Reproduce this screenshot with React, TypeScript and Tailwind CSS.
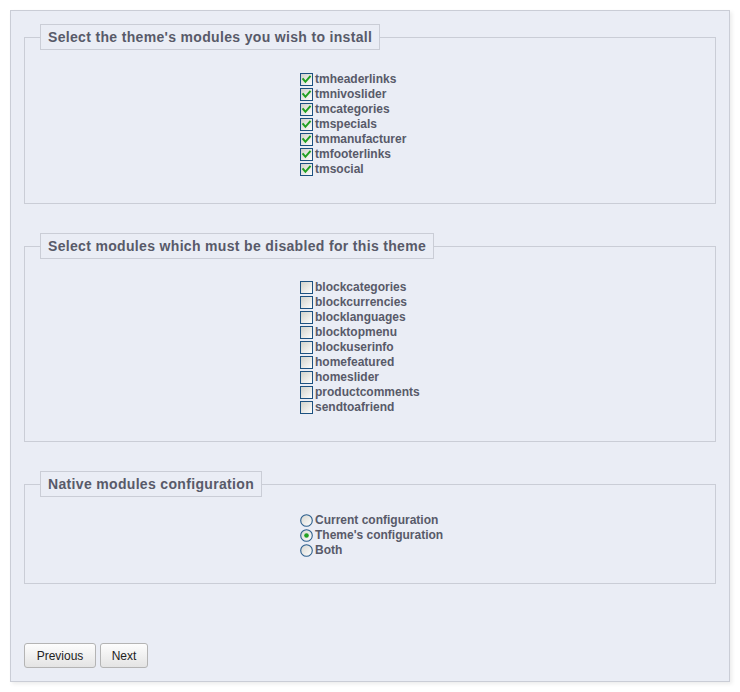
import React from 'react';

const installModules = [
  'tmheaderlinks',
  'tmnivoslider',
  'tmcategories',
  'tmspecials',
  'tmmanufacturer',
  'tmfooterlinks',
  'tmsocial',
];

const disableModules = [
  'blockcategories',
  'blockcurrencies',
  'blocklanguages',
  'blocktopmenu',
  'blockuserinfo',
  'homefeatured',
  'homeslider',
  'productcomments',
  'sendtoafriend',
];

const configOptions = ['Current configuration', "Theme's configuration", 'Both'];

function CheckBox({ checked }: { checked: boolean }) {
  return (
    <svg width="13" height="13" viewBox="0 0 13 13" className="shrink-0">
      <defs>
        <linearGradient id="cbFill" x1="0" y1="0" x2="1" y2="1">
          <stop offset="0" stopColor="#d0d0c8" />
          <stop offset="1" stopColor="#ffffff" />
        </linearGradient>
      </defs>
      <rect x="0.5" y="0.5" width="12" height="12" fill="url(#cbFill)" stroke="#1c5180" />
      {checked && (
        <path d="M3.2 6.2 L5.4 8.8 L9.9 3.6" fill="none" stroke="#21a121" strokeWidth="2" strokeLinecap="square" />
      )}
    </svg>
  );
}

function Radio({ checked }: { checked: boolean }) {
  return (
    <svg width="13" height="13" viewBox="0 0 13 13" className="shrink-0">
      <defs>
        <linearGradient id="rbFill" x1="0" y1="0" x2="1" y2="1">
          <stop offset="0" stopColor="#d6d6d0" />
          <stop offset="1" stopColor="#ffffff" />
        </linearGradient>
      </defs>
      <circle cx="6.5" cy="6.5" r="5.8" fill="url(#rbFill)" stroke="#2c5f8d" strokeWidth="1.1" />
      {checked && <circle cx="6.5" cy="6.5" r="2.3" fill="#21a121" />}
    </svg>
  );
}

function Legend({ children }: { children: React.ReactNode }) {
  return (
    <legend className="h-[26px] border border-[#cacdd6] px-[7px] text-[14px] leading-[24px] font-bold tracking-[0.33px] text-[#585a69]">
      {children}
    </legend>
  );
}

function Row({ control, label }: { control: React.ReactNode; label: string }) {
  return (
    <div className="flex h-[15px] items-center gap-[2px] text-[12px] font-bold leading-[15px] text-[#585a69]">
      {control}
      <span>{label}</span>
    </div>
  );
}

export default function App() {
  return (
    <div className="min-h-screen bg-white pl-[10px] pt-[10px]" style={{ fontFamily: '"Liberation Sans", Arial, sans-serif' }}>
      <div className="flex h-[672px] w-[720px] flex-col border border-[#cacdd6] bg-[#eaedf5] px-[13px] pt-[13px] pb-[13px] shadow-[2px_2px_4px_rgba(0,0,0,0.08)]">
        <fieldset className="border border-[#cacdd6] px-[15px] pb-[26px]">
          <Legend>Select the theme's modules you wish to install</Legend>
          <div className="mt-[22px] pl-[260px]">
            {installModules.map((m) => (
              <Row key={m} control={<CheckBox checked />} label={m} />
            ))}
          </div>
        </fieldset>

        <fieldset className="mt-[29px] border border-[#cacdd6] px-[15px] pb-[26px]">
          <Legend>Select modules which must be disabled for this theme</Legend>
          <div className="mt-[21px] pl-[260px]">
            {disableModules.map((m) => (
              <Row key={m} control={<CheckBox checked={false} />} label={m} />
            ))}
          </div>
        </fieldset>

        <fieldset className="mt-[29px] border border-[#cacdd6] px-[15px] pb-[25px]">
          <Legend>Native modules configuration</Legend>
          <div className="mt-[16px] pl-[260px]">
            {configOptions.map((o, i) => (
              <Row key={o} control={<Radio checked={i === 1} />} label={o} />
            ))}
          </div>
        </fieldset>

        <div className="mt-auto flex gap-[4px]">
          <button
            type="button"
            className="h-[25px] w-[72px] rounded-[3px] border border-[#b4b4b4] bg-gradient-to-b from-[#fdfdfd] to-[#e4e4e4] text-[12px] text-[#222]"
          >
            Previous
          </button>
          <button
            type="button"
            className="h-[25px] w-[48px] rounded-[3px] border border-[#b4b4b4] bg-gradient-to-b from-[#fdfdfd] to-[#e4e4e4] text-[12px] text-[#222]"
          >
            Next
          </button>
        </div>
      </div>
    </div>
  );
}
